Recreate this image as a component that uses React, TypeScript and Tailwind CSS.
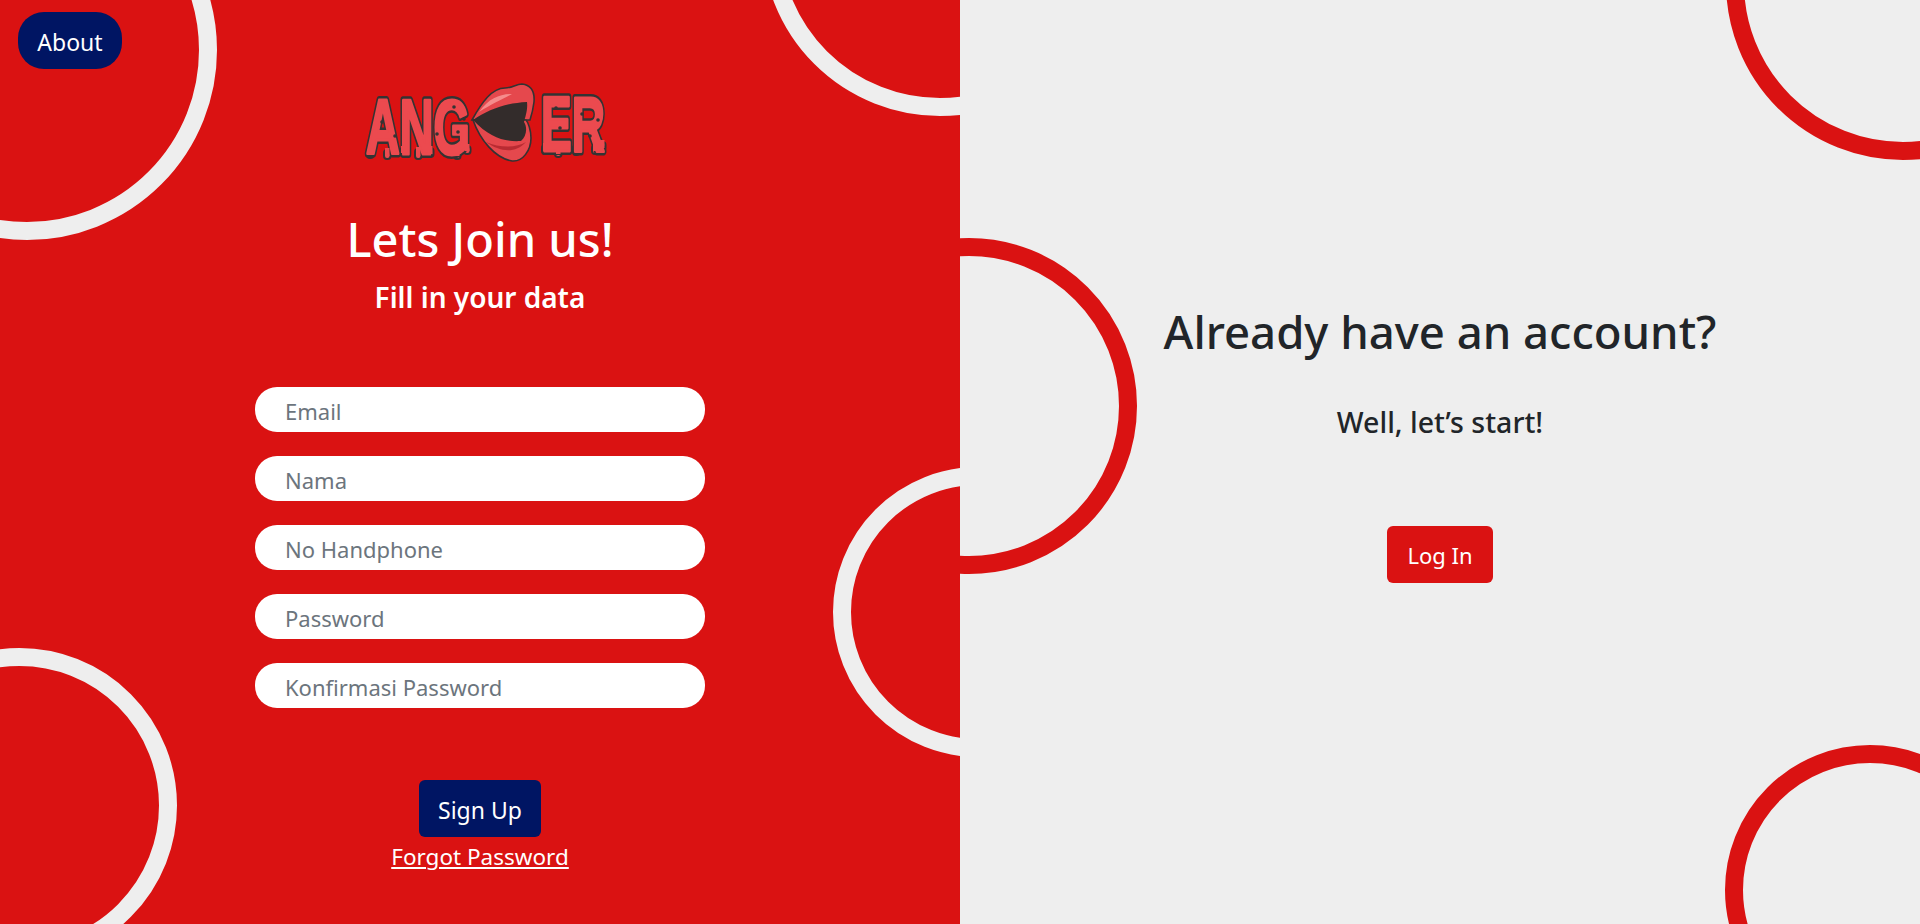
import React from 'react';

const fieldNames = ['Email', 'Nama', 'No Handphone', 'Password', 'Konfirmasi Password'];

const Ring: React.FC<{ className: string }> = ({ className }) => (
  <div className={`absolute rounded-full border-[18px] ${className}`} />
);

const drips = [
  [30, 82, 6], [47, 84, 5], [63, 82, 4], [78, 83, 6], [90, 82, 5], [106, 80, 6], [117, 84, 5], [127, 80, 4],
  [205, 79, 5], [218, 81, 6], [236, 79, 6], [255, 79, 5], [262, 76, 5],
];

const specks = [
  [42, 52], [55, 66], [97, 64], [114, 37], [118, 62], [124, 49], [216, 38], [220, 58], [242, 44], [258, 50], [250, 66],
];

const LogoWord: React.FC<{ x: number; y: number; sx: number; label: string }> = ({ x, y, sx, label }) => (
  <g transform={`translate(${x} ${y}) scale(${sx} 1)`} fontFamily="'Liberation Sans', sans-serif" fontWeight="700" fontSize="78" strokeLinejoin="round">
    <text stroke="#333" strokeWidth="8" fill="#333">{label}</text>
    <text stroke="#EC4A4F" strokeWidth="3" fill="#EC4A4F">{label}</text>
  </g>
);

const Logo = () => (
  <svg viewBox="-5 0 290 110" className="mt-[70px] h-[110px] w-[290px] shrink-0">
    {drips.map(([x, y, h], i) => (
      <rect key={i} x={x - 3} y={y - 4} width="6.5" height={h + 4} rx="3" fill="#EC4A4F" stroke="#333" strokeWidth="2" />
    ))}
    <LogoWord x={26} y={84} sx={0.6} label="ANG" />
    <LogoWord x={201} y={81} sx={0.59} label="ER" />
    {drips.map(([x, y, h], i) => (
      <rect key={`m${i}`} x={x - 2} y={y - 6} width="4.5" height={h + 3} fill="#EC4A4F" />
    ))}
    {specks.map(([x, y], i) => (
      <circle key={`s${i}`} cx={x} cy={y} r="1.8" fill="#333" />
    ))}
    <path d="M132 50C142 32 152 18 165 18C172 18 176 14 182 14C190 15 195 20 194 32C193 40 192 44 190 50L135 50Z" fill="#E5484D" stroke="#333" strokeWidth="1.6" />
    <path d="M133 50C140 70 155 88 172 91C183 92 191 80 191 68C191 60 188 52 186 50Z" fill="#E5484D" stroke="#333" strokeWidth="1.6" />
    <path d="M139 42C149 28 160 24 172 24C165 28 150 35 139 42Z" fill="#F58C8C" />
    <path d="M146 72C160 82 175 84 186 72C176 78 160 78 146 72Z" fill="#B92B32" />
    <path d="M133 50C148 40 165 33 187 32C188 40 185 48 184 52C188 58 186 67 181 71C165 72 150 68 133 50Z" fill="#332C2B" />
  </svg>
);

export default function App() {
  return (
    <div className="flex h-screen w-full overflow-hidden font-['Noto_Sans',sans-serif]">
      <div className="relative flex w-1/2 flex-col items-center overflow-hidden bg-[#DA1212] text-white">
        <Ring className="left-[-163px] top-[-140px] h-[380px] w-[380px] border-[#EEEEEE]" />
        <Ring className="left-[762px] top-[-240px] h-[356px] w-[356px] border-[#EEEEEE]" />
        <Ring className="left-[833px] top-[467px] h-[290px] w-[290px] border-[#EEEEEE]" />
        <Ring className="left-[-138px] top-[648px] h-[315px] w-[315px] border-[#EEEEEE]" />

        <button className="absolute left-[18px] top-[12px] h-[57px] w-[104px] rounded-[26px] bg-[#001563] pt-[3px] text-[23px] text-white">
          About
        </button>

        <div className="relative flex w-full flex-col items-center">
          <Logo />
          <h1 className="mt-[34px] text-[47px] font-medium leading-[50px]">Lets Join us!</h1>
          <h2 className="mt-[15px] text-[28px] font-semibold leading-[36px]">Fill in your data</h2>
          <form className="mt-[72px] flex flex-col gap-[24px]">
            {fieldNames.map((name) => (
              <input
                key={name}
                placeholder={name}
                className="h-[45px] w-[450px] rounded-[22px] bg-white pl-[30px] pt-[3px] text-[22px] text-[#212529] outline-none placeholder:text-[#6c757d]"
              />
            ))}
          </form>
          <button className="mt-[72px] h-[57px] w-[122px] rounded-[6px] bg-[#001563] pt-[3px] text-[23px] text-white">Sign Up</button>
          <a className="mt-[3px] text-[22.5px] leading-[33px] underline">Forgot Password</a>
        </div>
      </div>

      <div className="relative flex w-1/2 flex-col items-center overflow-hidden bg-[#EEEEEE] text-[#212529]">
        <Ring className="left-[-159px] top-[238px] h-[336px] w-[336px] border-[#DA1212]" />
        <Ring className="left-[766px] top-[-194px] h-[354px] w-[354px] border-[#DA1212]" />
        <Ring className="left-[765px] top-[745px] h-[290px] w-[290px] border-[#DA1212]" />

        <div className="relative flex flex-col items-center">
          <h1 className="mt-[296px] text-[45.5px] font-medium leading-[70px]">Already have an account?</h1>
          <h2 className="mt-[36px] text-[28.5px] font-medium leading-[40px]">Well, let’s start!</h2>
          <button className="mt-[84px] h-[57px] w-[106px] rounded-[6px] bg-[#DA1212] pt-[2px] text-[22px] text-white">Log In</button>
        </div>
      </div>
    </div>
  );
}
